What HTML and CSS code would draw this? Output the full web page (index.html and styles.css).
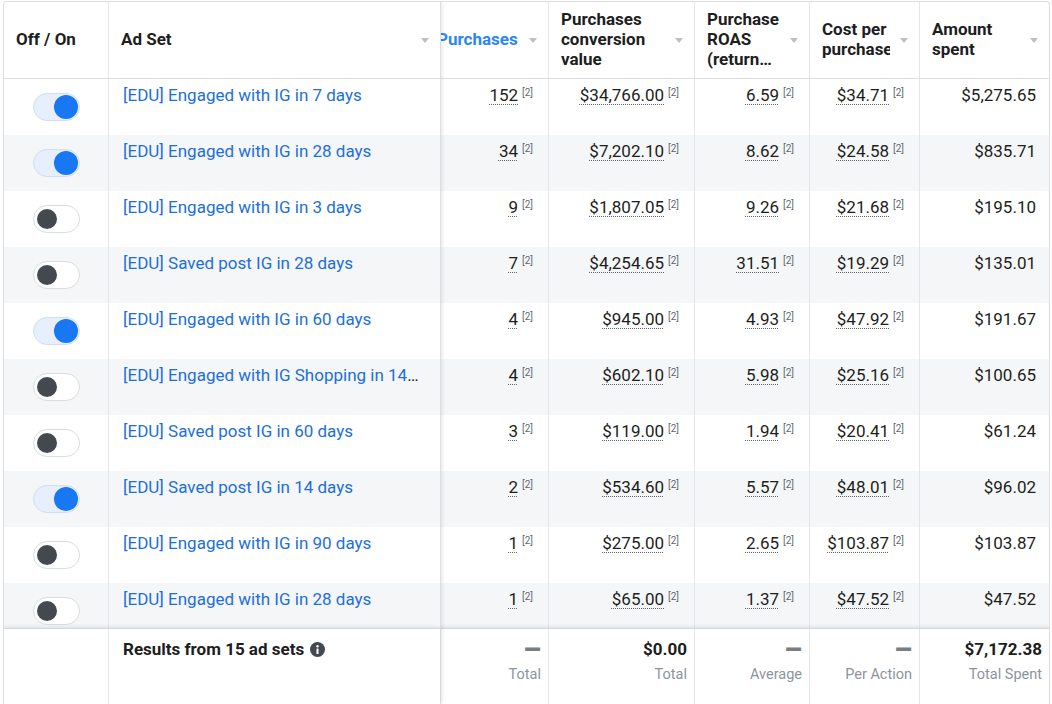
FILE: index.html
```html
<!DOCTYPE html>
<html lang="en">
<head>
<meta charset="utf-8">
<title>Ad Sets</title>
<link rel="stylesheet" href="styles.css">
</head>
<body>
<div class="table">
  <div class="pane fixed">
    <div class="head">
      <div class="hc c-toggle"><span class="ht">Off / On</span></div>
      <div class="hc c-name"><span class="ht">Ad Set</span><i class="caret"></i></div>
    </div>
    <div class="body">
      <div class="row"><div class="cell c-toggle"><span class="switch on"></span></div><div class="cell c-name"><a class="link" href="#">[EDU] Engaged with IG in 7 days</a></div></div>
      <div class="row"><div class="cell c-toggle"><span class="switch on"></span></div><div class="cell c-name"><a class="link" href="#">[EDU] Engaged with IG in 28 days</a></div></div>
      <div class="row"><div class="cell c-toggle"><span class="switch"></span></div><div class="cell c-name"><a class="link" href="#">[EDU] Engaged with IG in 3 days</a></div></div>
      <div class="row"><div class="cell c-toggle"><span class="switch"></span></div><div class="cell c-name"><a class="link" href="#">[EDU] Saved post IG in 28 days</a></div></div>
      <div class="row"><div class="cell c-toggle"><span class="switch on"></span></div><div class="cell c-name"><a class="link" href="#">[EDU] Engaged with IG in 60 days</a></div></div>
      <div class="row"><div class="cell c-toggle"><span class="switch"></span></div><div class="cell c-name"><a class="link" href="#">[EDU] Engaged with IG Shopping in 14 days</a></div></div>
      <div class="row"><div class="cell c-toggle"><span class="switch"></span></div><div class="cell c-name"><a class="link" href="#">[EDU] Saved post IG in 60 days</a></div></div>
      <div class="row"><div class="cell c-toggle"><span class="switch on"></span></div><div class="cell c-name"><a class="link" href="#">[EDU] Saved post IG in 14 days</a></div></div>
      <div class="row"><div class="cell c-toggle"><span class="switch"></span></div><div class="cell c-name"><a class="link" href="#">[EDU] Engaged with IG in 90 days</a></div></div>
      <div class="row"><div class="cell c-toggle"><span class="switch"></span></div><div class="cell c-name"><a class="link" href="#">[EDU] Engaged with IG in 28 days</a></div></div>
    </div>
    <div class="foot">
      <div class="fc c-toggle"></div>
      <div class="fc c-name results">Results from 15 ad sets
        <svg class="info" width="15" height="15" viewBox="0 0 16 16" aria-hidden="true"><circle cx="8" cy="8" r="8" fill="#444950"/><circle cx="8" cy="4.6" r="1.3" fill="#fff"/><rect x="6.9" y="6.8" width="2.2" height="6" rx="0.6" fill="#fff"/></svg>
      </div>
    </div>
  </div>
  <div class="pane scroll">
    <div class="inner">
      <div class="head">
        <div class="hc c1 first"><span class="ht sorted">Purchases</span><i class="caret"></i></div>
        <div class="hc c2"><span class="ht">Purchases conversion value</span><i class="caret"></i></div>
        <div class="hc c3"><span class="ht">Purchase ROAS (return on ad spend)</span><i class="caret"></i></div>
        <div class="hc c4"><span class="ht">Cost per purchase</span><i class="caret"></i></div>
        <div class="hc c5"><span class="ht">Amount spent</span><i class="caret"></i></div>
      </div>
      <div class="body">
        <div class="row"><div class="cell num c1"><span class="v">152</span><sup class="fn">[2]</sup></div><div class="cell num c2"><span class="v">$34,766.00</span><sup class="fn">[2]</sup></div><div class="cell num c3"><span class="v">6.59</span><sup class="fn">[2]</sup></div><div class="cell num c4"><span class="v">$34.71</span><sup class="fn">[2]</sup></div><div class="cell num c5">$5,275.65</div></div>
        <div class="row"><div class="cell num c1"><span class="v">34</span><sup class="fn">[2]</sup></div><div class="cell num c2"><span class="v">$7,202.10</span><sup class="fn">[2]</sup></div><div class="cell num c3"><span class="v">8.62</span><sup class="fn">[2]</sup></div><div class="cell num c4"><span class="v">$24.58</span><sup class="fn">[2]</sup></div><div class="cell num c5">$835.71</div></div>
        <div class="row"><div class="cell num c1"><span class="v">9</span><sup class="fn">[2]</sup></div><div class="cell num c2"><span class="v">$1,807.05</span><sup class="fn">[2]</sup></div><div class="cell num c3"><span class="v">9.26</span><sup class="fn">[2]</sup></div><div class="cell num c4"><span class="v">$21.68</span><sup class="fn">[2]</sup></div><div class="cell num c5">$195.10</div></div>
        <div class="row"><div class="cell num c1"><span class="v">7</span><sup class="fn">[2]</sup></div><div class="cell num c2"><span class="v">$4,254.65</span><sup class="fn">[2]</sup></div><div class="cell num c3"><span class="v">31.51</span><sup class="fn">[2]</sup></div><div class="cell num c4"><span class="v">$19.29</span><sup class="fn">[2]</sup></div><div class="cell num c5">$135.01</div></div>
        <div class="row"><div class="cell num c1"><span class="v">4</span><sup class="fn">[2]</sup></div><div class="cell num c2"><span class="v">$945.00</span><sup class="fn">[2]</sup></div><div class="cell num c3"><span class="v">4.93</span><sup class="fn">[2]</sup></div><div class="cell num c4"><span class="v">$47.92</span><sup class="fn">[2]</sup></div><div class="cell num c5">$191.67</div></div>
        <div class="row"><div class="cell num c1"><span class="v">4</span><sup class="fn">[2]</sup></div><div class="cell num c2"><span class="v">$602.10</span><sup class="fn">[2]</sup></div><div class="cell num c3"><span class="v">5.98</span><sup class="fn">[2]</sup></div><div class="cell num c4"><span class="v">$25.16</span><sup class="fn">[2]</sup></div><div class="cell num c5">$100.65</div></div>
        <div class="row"><div class="cell num c1"><span class="v">3</span><sup class="fn">[2]</sup></div><div class="cell num c2"><span class="v">$119.00</span><sup class="fn">[2]</sup></div><div class="cell num c3"><span class="v">1.94</span><sup class="fn">[2]</sup></div><div class="cell num c4"><span class="v">$20.41</span><sup class="fn">[2]</sup></div><div class="cell num c5">$61.24</div></div>
        <div class="row"><div class="cell num c1"><span class="v">2</span><sup class="fn">[2]</sup></div><div class="cell num c2"><span class="v">$534.60</span><sup class="fn">[2]</sup></div><div class="cell num c3"><span class="v">5.57</span><sup class="fn">[2]</sup></div><div class="cell num c4"><span class="v">$48.01</span><sup class="fn">[2]</sup></div><div class="cell num c5">$96.02</div></div>
        <div class="row"><div class="cell num c1"><span class="v">1</span><sup class="fn">[2]</sup></div><div class="cell num c2"><span class="v">$275.00</span><sup class="fn">[2]</sup></div><div class="cell num c3"><span class="v">2.65</span><sup class="fn">[2]</sup></div><div class="cell num c4"><span class="v">$103.87</span><sup class="fn">[2]</sup></div><div class="cell num c5">$103.87</div></div>
        <div class="row"><div class="cell num c1"><span class="v">1</span><sup class="fn">[2]</sup></div><div class="cell num c2"><span class="v">$65.00</span><sup class="fn">[2]</sup></div><div class="cell num c3"><span class="v">1.37</span><sup class="fn">[2]</sup></div><div class="cell num c4"><span class="v">$47.52</span><sup class="fn">[2]</sup></div><div class="cell num c5">$47.52</div></div>
      </div>
      <div class="foot">
        <div class="fc fnum c1"><div class="fval"><span class="dash">—</span></div><div class="flabel">Total</div></div>
        <div class="fc fnum c2"><div class="fval">$0.00</div><div class="flabel">Total</div></div>
        <div class="fc fnum c3"><div class="fval"><span class="dash">—</span></div><div class="flabel">Average</div></div>
        <div class="fc fnum c4"><div class="fval"><span class="dash">—</span></div><div class="flabel">Per Action</div></div>
        <div class="fc fnum c5"><div class="fval">$7,172.38</div><div class="flabel">Total Spent</div></div>
      </div>
    </div>
  </div>
</div>
</body>
</html>
```

FILE: styles.css
```css
* { box-sizing: border-box; }
html, body {
  margin: 0;
  height: 704px;
  overflow: hidden;
  background: #fff;
}
body {
  font-family: Roboto, "Liberation Sans", Arial, sans-serif;
  font-size: 17px;
  color: #1c1e21;
}

.table {
  display: flex;
  height: 703px;
  margin: 1px 2px 0 3px;
  border: 1px solid #dadde1;
  border-bottom: 0;
  border-radius: 4px 4px 0 0;
  overflow: hidden;
}
.pane {
  display: flex;
  flex-direction: column;
}
.fixed {
  width: 437px;
  flex: none;
  border-right: 1px solid #dcdee3;
  box-shadow: 2px 0 3px rgba(0, 0, 0, 0.07);
  z-index: 1;
  background: #fff;
}
.scroll {
  flex: 1;
  min-width: 0;
  overflow: hidden;
}
.inner {
  display: flex;
  flex-direction: column;
  width: 626px;
  height: 100%;
  margin-left: -18px;
}

.head {
  display: flex;
  flex: none;
  height: 77px;
  border-bottom: 1px solid #dadde1;
}
.body {
  flex: none;
  height: 549px;
  overflow: hidden;
}
.row {
  display: flex;
  height: 56px;
}
.row:nth-child(even) { background: #f5f6f7; }
.foot {
  display: flex;
  flex: 1;
  border-top: 1px solid #d4d7db;
  box-shadow: 0 -2px 3px rgba(0, 0, 0, 0.07);
  background: #fff;
}

/* columns */
.c-toggle { width: 105px; flex: none; border-right: 1px solid #e4e6eb; }
.c-name { width: 331px; flex: none; }
.c1 { width: 126px; flex: none; border-right: 1px solid #e4e6eb; }
.c2 { width: 146px; flex: none; border-right: 1px solid #e4e6eb; }
.c3 { width: 115px; flex: none; border-right: 1px solid #e4e6eb; }
.c4 { width: 110px; flex: none; border-right: 1px solid #e4e6eb; }
.c5 { width: 129px; flex: none; }

/* header cells */
.hc {
  display: flex;
  align-items: center;
  padding: 0 11px 2px 12px;
  font-weight: 700;
  line-height: 20px;
}
.hc.first { padding-left: 14px; }
.ht {
  flex: 1;
  min-width: 0;
  margin-right: 10px;
  overflow: hidden;
  display: -webkit-box;
  -webkit-box-orient: vertical;
  -webkit-line-clamp: 3;
}
.ht.sorted { color: #2d86f3; }
.caret {
  flex: none;
  width: 0;
  height: 0;
  margin-top: 2px;
  border-left: 4.5px solid transparent;
  border-right: 4.5px solid transparent;
  border-top: 5px solid #bcc0c4;
}

/* body cells */
.cell {
  padding-top: 6px;
  line-height: 20px;
}
.cell.c-toggle {
  display: flex;
  align-items: center;
  justify-content: center;
  padding-top: 0;
}
.cell.c-name {
  padding-left: 14px;
  padding-right: 18px;
  white-space: nowrap;
  overflow: hidden;
  text-overflow: ellipsis;
}
.link {
  color: #216fdb;
  text-decoration: none;
}
.num {
  text-align: right;
  padding-right: 15px;
  white-space: nowrap;
}
.num.c5 { padding-right: 13px; }
.v {
  text-decoration: underline dotted #606770;
  text-decoration-thickness: 1px;
  text-underline-offset: 3px;
}
.fn {
  font-size: 10px;
  line-height: 10px;
  color: #606770;
  vertical-align: 5px;
  margin-left: 4px;
}

/* toggle switch */
.switch {
  display: flex;
  align-items: center;
  width: 47px;
  height: 28px;
  padding: 0 3px;
  border: 1px solid #dadde1;
  border-radius: 14px;
  background: #fff;
}
.switch::after {
  content: "";
  width: 20px;
  height: 20px;
  border-radius: 50%;
  background: #444950;
}
.switch.on {
  justify-content: flex-end;
  padding: 0 1px;
  background: #e7effc;
  border-color: #d3ddef;
}
.switch.on::after {
  width: 24px;
  height: 24px;
  background: #1877f2;
}

/* footer */
.fc {
  padding-top: 10px;
  line-height: 20px;
}
.results {
  padding-left: 14px;
  font-weight: 700;
  display: flex;
  align-items: flex-start;
  gap: 6px;
  height: 100%;
}
.info { margin-top: 3px; flex: none; }
.fnum {
  text-align: right;
  padding-right: 7px;
}
.fval {
  height: 20px;
  font-weight: 700;
}
.dash {
  display: inline-block;
  line-height: 20px;
  color: #7a7e83;
  font-size: 17px;
  font-weight: 700;
  transform-origin: right center;
  transform: scale(1.3, 1.8);
}
.flabel {
  margin-top: 6px;
  color: #8d949e;
  font-size: 14.5px;
}
```
